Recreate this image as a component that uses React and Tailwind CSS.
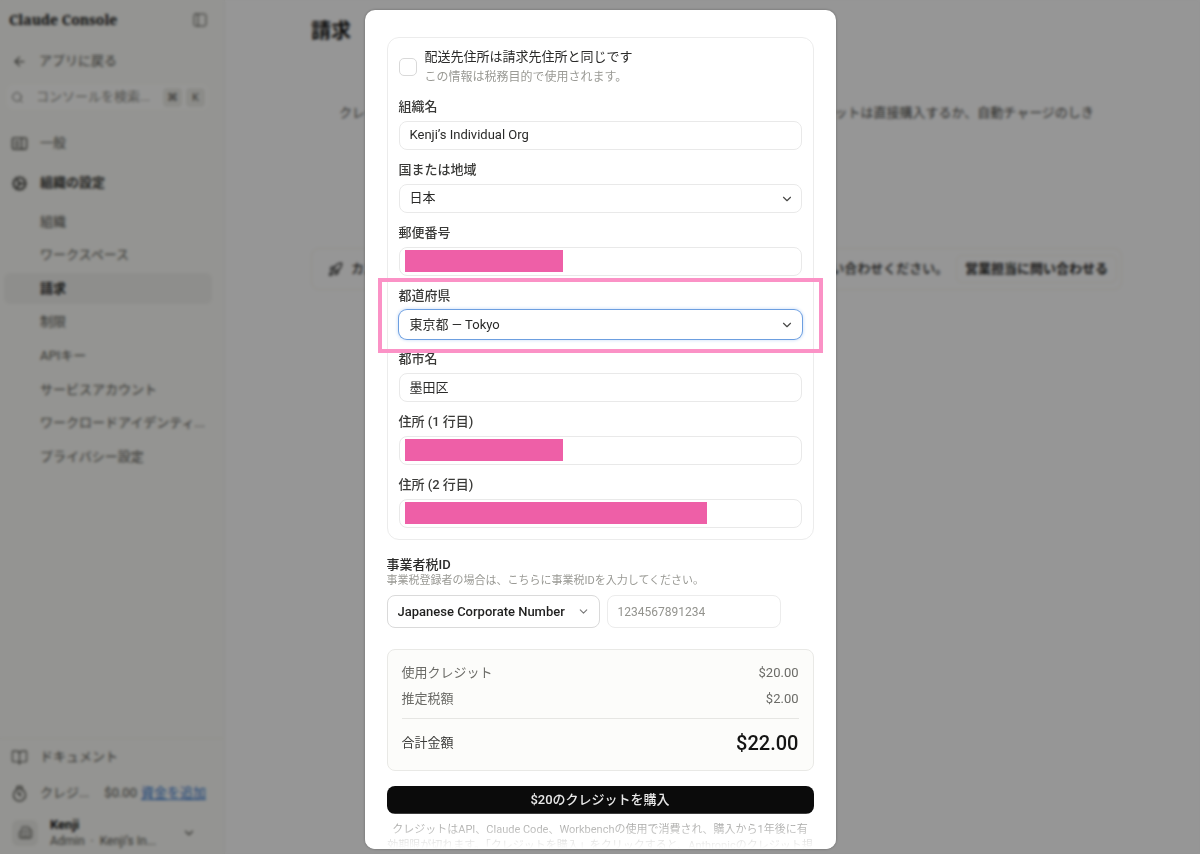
import {
  ArrowLeft,
  BookOpen,
  Building2,
  ChevronDown,
  Cog,
  PanelLeft,
  Rocket,
  Search,
} from "lucide-react";

const settingsLinks = [
  "組織",
  "ワークスペース",
  "請求",
  "制限",
  "APIキー",
  "サービスアカウント",
  "ワークロードアイデンティ...",
  "プライバシー設定",
];

function GeneralIcon() {
  return (
    <svg width="17" height="17" viewBox="0 0 24 24" fill="none" stroke="currentColor" strokeWidth="2">
      <rect x="2" y="4" width="20" height="16" rx="2" />
      <path d="M15 4v16M5.5 9h6M5.5 12.5h6M5.5 16h6" />
    </svg>
  );
}

function CreditIcon() {
  return (
    <svg
      width="17"
      height="17"
      viewBox="0 0 24 24"
      fill="none"
      stroke="currentColor"
      strokeWidth="2"
      strokeLinecap="round"
    >
      <circle cx="12" cy="14" r="8.5" />
      <path d="M8 5.5 9 2h6l1 3.5M9 11l5 5M14 11.5h-3" />
    </svg>
  );
}

function Sidebar() {
  return (
    <aside className="flex w-[225px] shrink-0 flex-col border-r border-[#f0f0ec] bg-[#f7f7f3] text-[13px] text-[#55554f]">
      <div className="flex h-10 items-center justify-between pr-4 pl-[9px]">
        <span className="font-['Noto_Serif','Liberation_Serif',serif] text-sm font-bold text-[#141413]">
          Claude Console
        </span>
        <button type="button" aria-label="サイドバーを閉じる">
          <PanelLeft size={16} strokeWidth={1.5} />
        </button>
      </div>
      <a href="#back" className="flex h-[42px] items-center gap-3 pl-3">
        <ArrowLeft size={15} strokeWidth={2} />
        アプリに戻る
      </a>
      <div className="mt-[3px] mr-4 ml-[7px] flex h-6 items-center rounded-md bg-[#fbfbf9] pr-[3px] pl-1">
        <Search size={13} strokeWidth={1.5} />
        <input
          aria-label="コンソールを検索"
          placeholder="コンソールを検索..."
          className="ml-3 w-0 flex-1 bg-transparent text-[13px] placeholder:text-[#8a8a84]"
        />
        <kbd className="flex size-[19px] items-center justify-center rounded bg-[#e9e9e4] font-sans text-[11px]">⌘</kbd>
        <kbd className="ml-1 flex size-[19px] items-center justify-center rounded bg-[#e9e9e4] font-sans text-[11px]">K</kbd>
      </div>
      <a href="#general" className="mt-3 flex h-10 items-center gap-3 pt-1 pl-[11px]">
        <GeneralIcon />
        一般
      </a>
      <a href="#org" className="flex h-10 items-center gap-3 pt-1 pl-[11px] font-bold text-[#3a3a36]">
        <Cog size={17} strokeWidth={2} />
        組織の設定
      </a>
      <nav className="mt-[5px] flex h-[266px] flex-col justify-between pr-3 pl-1">
        {settingsLinks.map((label) => (
          <a
            key={label}
            href="#settings"
            className={
              label === "請求"
                ? "flex h-[31px] items-center rounded-md bg-[#ededea] pl-9 font-bold text-[#262624]"
                : "flex h-[31px] items-center pl-9"
            }
          >
            {label}
          </a>
        ))}
      </nav>
      <div className="mt-auto border-t border-[#efefeb]">
        <a href="#docs" className="flex h-9 items-center gap-3 pl-[11px]">
          <BookOpen size={17} strokeWidth={1.5} />
          ドキュメント
        </a>
        <div className="flex h-9 items-center pr-[18px] pl-[11px]">
          <CreditIcon />
          <span className="ml-3">クレジ...</span>
          <span className="ml-auto">$0.00</span>
          <a href="#fund" className="ml-1 text-[#3576cc] underline underline-offset-2">
            資金を追加
          </a>
        </div>
        <button type="button" className="flex h-[43px] w-full items-center pr-7 pl-3 text-left">
          <span className="flex size-[26px] items-center justify-center rounded-md bg-[#e9e9e5]">
            <Building2 size={15} strokeWidth={1.5} />
          </span>
          <span className="ml-3 flex flex-col">
            <span className="text-[13px] leading-4 font-bold text-[#141413]">Kenji</span>
            <span className="text-xs leading-4">Admin&nbsp; · &nbsp;Kenji’s In...</span>
          </span>
          <ChevronDown size={14} className="ml-auto" />
        </button>
      </div>
    </aside>
  );
}

function BillingPage() {
  return (
    <main className="min-w-0 flex-1 bg-[#fafafa] pr-[78px] pl-[86px] text-[13px] text-[#4b4b47]">
      <div className="mx-auto max-w-[811px]">
        <h1 className="pt-[17px] text-xl leading-7 font-bold text-[#141413]">請求</h1>
        <p className="mt-[57px] text-center leading-[22px]">
          クレジット残高はAPIとWorkbenchの利用、Claude Codeなどに使用されます。クレジットは直接購入するか、自動チャージのしき
          <br />
          い値を設定してください。
        </p>
        <div className="mt-[102px] flex h-[42px] items-center rounded-lg border border-[#f1efe8] pr-1 pl-4 font-medium text-[#262624]">
          <Rocket size={15} strokeWidth={2} className="shrink-0" />
          <span className="ml-2 whitespace-nowrap">
            カスタムプランや請求書払い、大規模なご利用をされる場合は、営業担当までお問い合わせください。
          </span>
          <button
            type="button"
            className="ml-auto h-7 rounded-md border border-[#f1efe8] px-2 font-bold whitespace-nowrap"
          >
            営業担当に問い合わせる
          </button>
        </div>
      </div>
    </main>
  );
}

const fieldBox =
  "block h-[29px] w-full rounded-lg border border-[#e9e9e9] bg-white px-2.5 pb-0.5 text-[13px] text-[#2a2a29] outline-none";

function Field({ id, label, children }) {
  return (
    <div className="flex flex-col gap-1">
      <label htmlFor={id} className="h-5 text-[13px] leading-5 font-medium text-[#3a3a38]">
        {label}
      </label>
      <div className="relative">{children}</div>
    </div>
  );
}

function SelectChevron() {
  return (
    <ChevronDown
      size={14}
      strokeWidth={2}
      className="pointer-events-none absolute top-2 right-2 text-[#4a4a48]"
    />
  );
}

function AddressCard() {
  return (
    <section className="flex flex-col gap-2.5 rounded-xl border border-[#ececec] px-[11px] pt-[9px] pb-[11px]">
      <div className="flex items-center gap-2">
        <input
          id="same"
          type="checkbox"
          className="size-[18px] appearance-none rounded-[5px] border border-[#d9d9d9] bg-white"
        />
        <label htmlFor="same" className="flex flex-col">
          <span className="text-[13px] leading-5 text-[#2a2a29]">配送先住所は請求先住所と同じです</span>
          <span className="text-xs leading-5 text-[#9a9a95]">この情報は税務目的で使用されます。</span>
        </label>
      </div>
      <Field id="org-name" label="組織名">
        <input id="org-name" defaultValue="Kenji’s Individual Org" className={fieldBox} />
      </Field>
      <Field id="country" label="国または地域">
        <select id="country" className={`${fieldBox} appearance-none`}>
          <option>日本</option>
        </select>
        <SelectChevron />
      </Field>
      <Field id="postal" label="郵便番号">
        <input id="postal" className={fieldBox} />
        <span className="absolute top-[3px] left-1.5 h-[22px] w-[158px] bg-[#ee5fa7]" />
      </Field>
      <div className="relative">
        <Field id="prefecture" label="都道府県">
          <select
            id="prefecture"
            className="block h-[29px] w-full appearance-none rounded-lg border border-transparent bg-white px-2.5 text-[13px] text-[#2a2a29] shadow-[0_0_0_1px_#6d9fe0,0_0_3px_2px_#dbe8fa] outline-none"
          >
            <option>東京都 — Tokyo</option>
          </select>
          <SelectChevron />
        </Field>
        <span className="pointer-events-none absolute -inset-x-[21px] -top-2 -bottom-3.5 z-10 border-4 border-[#fb92c6]" />
      </div>
      <Field id="city" label="都市名">
        <input id="city" defaultValue="墨田区" className={fieldBox} />
      </Field>
      <Field id="line1" label="住所 (1 行目)">
        <input id="line1" className={fieldBox} />
        <span className="absolute top-[3px] left-1.5 h-[22px] w-[158px] bg-[#ee5fa7]" />
      </Field>
      <Field id="line2" label="住所 (2 行目)">
        <input id="line2" className={fieldBox} />
        <span className="absolute top-[3px] left-1.5 h-[22px] w-[302px] bg-[#ee5fa7]" />
      </Field>
    </section>
  );
}

function TaxId() {
  return (
    <section className="mt-4">
      <label htmlFor="tax-id" className="block text-[13px] leading-[18px] font-medium text-[#2a2a29]">
        事業者税ID
      </label>
      <p className="text-[11px] leading-[14px] text-[#9a9a95]">
        事業税登録者の場合は、こちらに事業税IDを入力してください。
      </p>
      <div className="mt-[7px] flex gap-[7px]">
        <div className="relative w-[213px]">
          <select
            aria-label="税IDの種類"
            className="block h-[33px] w-full appearance-none rounded-lg border border-[#dadada] bg-white px-2.5 text-[13px] font-medium text-[#1f1f1e]"
          >
            <option>Japanese Corporate Number</option>
          </select>
          <ChevronDown
            size={13}
            strokeWidth={2}
            className="pointer-events-none absolute top-2.5 right-2.5 text-[#777]"
          />
        </div>
        <input
          id="tax-id"
          placeholder="1234567891234"
          className="h-[33px] w-[174px] rounded-lg border border-[#ececec] bg-white px-2.5 text-xs placeholder:text-[#93938e]"
        />
      </div>
    </section>
  );
}

function Summary() {
  return (
    <dl className="mt-[21px] rounded-lg border border-[#e9e9e6] bg-[#fcfcfa] px-3.5 pt-2.5 pb-[13px] text-[13px] text-[#6b6b67]">
      <div className="flex justify-between leading-[26px]">
        <dt>使用クレジット</dt>
        <dd>$20.00</dd>
      </div>
      <div className="flex justify-between leading-[26px]">
        <dt>推定税額</dt>
        <dd>$2.00</dd>
      </div>
      <div className="mt-1.5 flex items-center justify-between border-t border-[#e6e6e3] pt-2.5 leading-7">
        <dt className="text-[#3a3a38]">合計金額</dt>
        <dd className="text-xl leading-7 font-medium text-[#141413]">$22.00</dd>
      </div>
    </dl>
  );
}

export default function App() {
  return (
    <div className="font-['Roboto','Noto_Sans_CJK_JP',sans-serif]">
      <div className="flex h-screen overflow-hidden">
        <Sidebar />
        <BillingPage />
      </div>
      <div className="fixed inset-0 flex justify-center bg-black/40 pt-2.5 pb-[5px] backdrop-blur-[1.5px]">
        <div
          role="dialog"
          aria-modal="true"
          aria-label="クレジットを購入"
          className="relative w-full max-w-[471px] overflow-hidden rounded-[10px] bg-white px-[22px] pt-[27px] shadow-[0_0_3px_rgba(0,0,0,0.3)]"
        >
          <AddressCard />
          <TaxId />
          <Summary />
          <button
            type="button"
            className="mt-[15px] h-7 w-full rounded-lg bg-[#0b0b0b] text-[13px] font-medium text-[#e8e8e8]"
          >
            $20のクレジットを購入
          </button>
          <p className="mt-2 text-center text-[11px] leading-4 text-[#666663]">
            クレジットはAPI、Claude Code、Workbenchの使用で消費され、購入から1年後に有
            <br />
            効期限が切れます。「クレジットを購入」をクリックすると、Anthropicのクレジット規
          </p>
          <div className="pointer-events-none absolute inset-x-0 bottom-0 h-9 bg-linear-to-t from-white via-white/60 to-white/20" />
        </div>
      </div>
    </div>
  );
}
